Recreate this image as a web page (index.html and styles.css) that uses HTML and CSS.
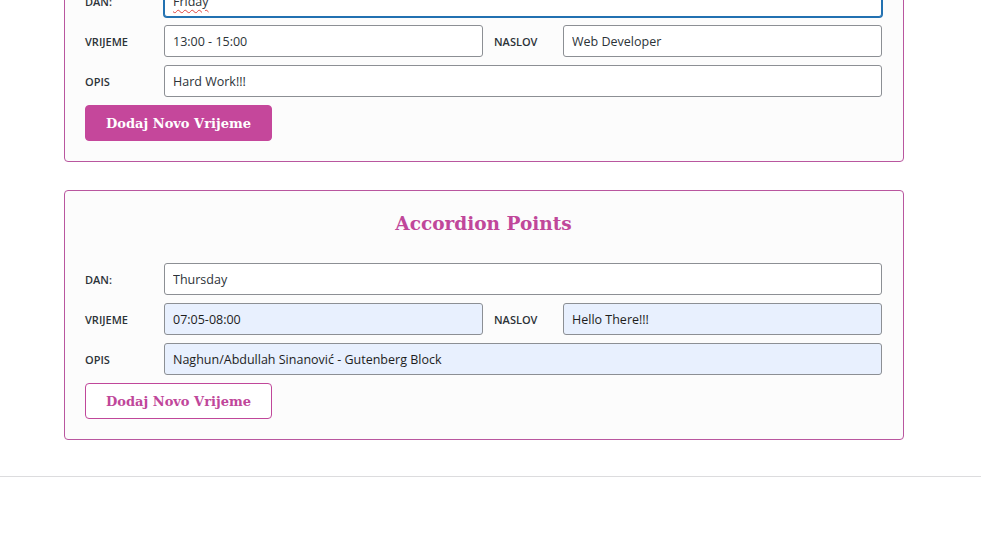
FILE: index.html
```html
<!DOCTYPE html>
<html lang="bs">
<head>
<meta charset="utf-8">
<title>Accordion Points</title>
<link rel="stylesheet" href="styles.css">
</head>
<body>
<main class="page">
  <section class="card">
    <h2 class="card-title">Accordion Points</h2>
    <div class="row">
      <label class="lbl">DAN:</label>
      <div class="field field-focus"><span class="misspelled">Friday</span></div>
    </div>
    <div class="row">
      <label class="lbl">VRIJEME</label>
      <input class="field" type="text" value="13:00 - 15:00">
      <label class="lbl lbl-inline">NASLOV</label>
      <input class="field" type="text" value="Web Developer">
    </div>
    <div class="row">
      <label class="lbl">OPIS</label>
      <input class="field" type="text" value="Hard Work!!!">
    </div>
    <button class="btn btn-filled" type="button">Dodaj Novo Vrijeme</button>
  </section>

  <section class="card">
    <h2 class="card-title">Accordion Points</h2>
    <div class="row">
      <label class="lbl">DAN:</label>
      <input class="field" type="text" value="Thursday">
    </div>
    <div class="row">
      <label class="lbl">VRIJEME</label>
      <input class="field field-auto" type="text" value="07:05-08:00">
      <label class="lbl lbl-inline">NASLOV</label>
      <input class="field field-auto" type="text" value="Hello There!!!">
    </div>
    <div class="row">
      <label class="lbl">OPIS</label>
      <input class="field field-auto" type="text" value="Naghun/Abdullah Sinanović - Gutenberg Block">
    </div>
    <button class="btn btn-outline" type="button">Dodaj Novo Vrijeme</button>
  </section>
</main>
<div class="footer-line"></div>
</body>
</html>
```
FILE: styles.css
```css
* { box-sizing: border-box; }

html, body {
  margin: 0;
  padding: 0;
  background: #ffffff;
}

body {
  font-family: "Open Sans", "Noto Sans", sans-serif;
  color: #1d2327;
  overflow: hidden;
}

.page {
  margin-top: -88px;
  padding-left: 64px;
  width: 904px;
}

.card {
  height: 250px;
  background: #fcfcfc;
  border: 1px solid #b9569f;
  border-radius: 4px;
  padding: 20px 21px 20px 20px;
  margin-bottom: 28px;
}

.card:last-child {
  margin-bottom: 36px;
}

.card-title {
  margin: 0 0 26px;
  height: 26px;
  line-height: 26px;
  text-align: center;
  font-family: "DejaVu Serif", serif;
  font-weight: 700;
  font-size: 18.5px;
  color: #c0479a;
}

.row {
  display: flex;
  align-items: center;
  height: 32px;
  margin-bottom: 8px;
}

.lbl {
  flex: 0 0 79px;
  font-size: 11px;
  font-weight: 560;
  color: #2c3338;
  line-height: 1;
}

.lbl-inline {
  flex: 0 0 69px;
  margin-left: 11px;
}

.field {
  flex: 1 1 0;
  min-width: 0;
  height: 32px;
  margin: 0;
  padding: 0 8px;
  border: 1px solid #8c8f94;
  border-radius: 3px;
  background: #ffffff;
  font-family: "Open Sans", "Noto Sans", sans-serif;
  font-size: 12.5px;
  color: #2c3338;
  outline: none;
  display: flex;
  align-items: center;
}

.field-focus {
  border-color: #2271b1;
  box-shadow: 0 0 0 1px #2271b1;
}

.misspelled {
  text-decoration: underline wavy #e0453f;
  text-decoration-thickness: 1px;
  text-underline-offset: 3px;
}

.field-auto {
  background: #e8f0fe;
  color: #1d1d1d;
}

.btn {
  display: block;
  width: 187px;
  height: 36px;
  padding: 0;
  border-radius: 4px;
  font-family: "DejaVu Serif", serif;
  font-weight: 700;
  font-size: 13px;
  cursor: pointer;
}

.btn-filled {
  background: #c5479b;
  border: 1px solid #c5479b;
  color: #ffffff;
}

.btn-outline {
  background: #ffffff;
  border: 1px solid #c0479a;
  color: #c0479a;
}

.footer-line {
  height: 1px;
  background: #dcdcde;
  width: 100%;
}
```
